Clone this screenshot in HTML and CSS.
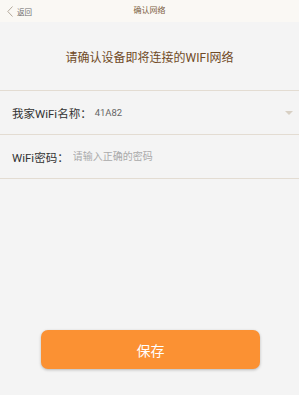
FILE: index.html
```html
<!DOCTYPE html>
<html lang="zh-CN">
<head>
    <meta charset="UTF-8">
    <meta name="viewport" content="width=device-width, initial-scale=1.0">
    <title>确认网络</title>
    <link rel="stylesheet" href="styles.css">
</head>
<body>

<div class="page">
    <!-- Top bar -->
    <div class="topbar">
        <div class="back">
            <svg class="back-icon" width="6" height="11" viewBox="0 0 6 11">
                <polyline points="5.5,0.5 0.8,5.5 5.5,10.5" fill="none" stroke="#b4a99c" stroke-width="1"/>
            </svg>
            <span>返回</span>
        </div>
        <div class="title">确认网络</div>
    </div>

    <div class="notice">请确认设备即将连接的WIFI网络</div>

    <div class="form">
        <div class="row">
            <span class="label">我家WiFi名称：</span>
            <span class="value">41A82</span>
            <span class="caret"></span>
        </div>
        <div class="row">
            <span class="label">WiFi密码：</span>
            <input class="pwd" type="password" placeholder="请输入正确的密码">
        </div>
    </div>

    <button class="save-btn">保存</button>
</div>

</body>
</html>
```

FILE: styles.css
```css
body {
    margin: 0;
    padding: 0;
    background-color: #f4f4f4;
    font-family: Roboto, "Noto Sans CJK SC", sans-serif;
}

.page {
    width: 299px;
    height: 395px;
    display: flex;
    flex-direction: column;
}

/* Top bar */
.topbar {
    height: 22px;
    background-color: #faf8f4;
    display: flex;
    align-items: center;
    position: relative;
}

.back {
    display: flex;
    align-items: center;
    margin-left: 7px;
    font-size: 7.5px;
    color: #6f6f6f;
}

.back-icon {
    margin-right: 4px;
}

.title {
    position: absolute;
    left: 0;
    right: 0;
    top: 0;
    line-height: 22px;
    text-align: center;
    font-size: 8px;
    color: #7d5f42;
}

.notice {
    height: 68px;
    display: flex;
    align-items: center;
    justify-content: center;
    font-size: 12px;
    color: #704a26;
}

/* Form rows */
.form {
    border-top: 1px solid #e3dcd2;
}

.row {
    height: 43px;
    display: flex;
    align-items: center;
    padding: 0 6px 0 12px;
    border-bottom: 1px solid #e3dcd2;
}

.label {
    font-size: 11.5px;
    color: #333;
}

.value {
    margin-left: 3px;
    font-size: 9.5px;
    color: #666;
    flex: 1;
}

.caret {
    width: 0;
    height: 0;
    border-left: 4px solid transparent;
    border-right: 4px solid transparent;
    border-top: 4px solid #d8d0c4;
}

.pwd {
    flex: 1;
    margin-left: 4px;
    border: none;
    background: transparent;
    outline: none;
    padding: 0;
    font-family: inherit;
    font-size: 10px;
}

.pwd::placeholder {
    color: #aaa;
}

/* Save button */
.save-btn {
    margin: 151px 0 0 41px;
    width: 219px;
    height: 39px;
    border: none;
    border-radius: 7px;
    background-color: #fb9133;
    color: white;
    font-family: inherit;
    font-size: 14px;
    box-shadow: 0 1px 3px rgba(0, 0, 0, 0.25);
}
```
